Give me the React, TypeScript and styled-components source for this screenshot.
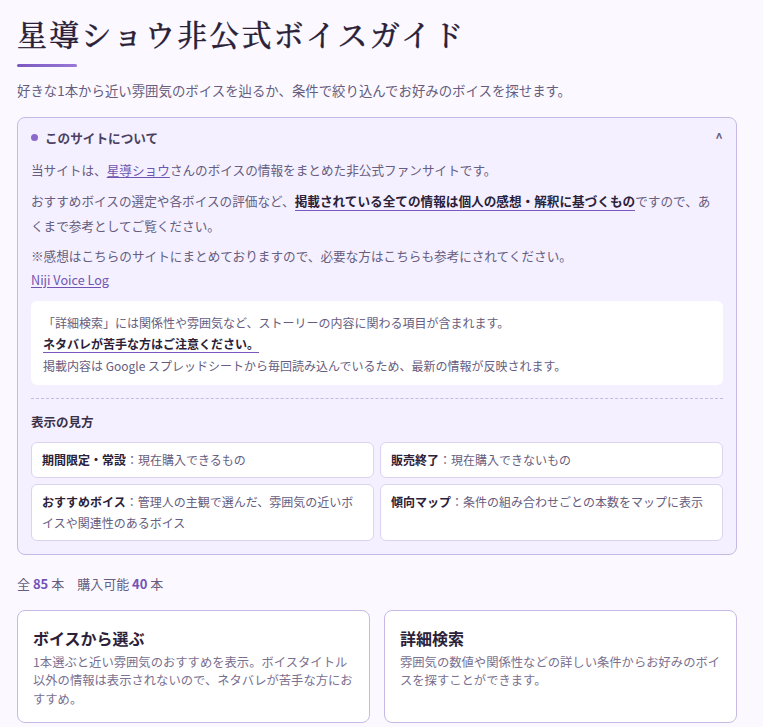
import * as React from "react";
import styled, { createGlobalStyle } from "styled-components";

const GlobalStyle = createGlobalStyle`
  html, body {
    margin: 0;
    padding: 0;
    height: 727px;
    overflow: hidden;
    background: #fbf9ff;
  }
  body {
    font-family: "Noto Sans CJK JP", "Noto Sans", sans-serif;
    color: #665d80;
  }
`;

const Page = styled.div`
  width: 720px;
  margin-left: 17px;
  padding-top: 13px;
`;

const Title = styled.h1`
  margin: 0;
  font-family: "Noto Serif CJK JP", "Liberation Serif", "Noto Sans CJK JP", serif;
  font-weight: 500;
  font-size: 30px;
  line-height: 40px;
  letter-spacing: 2.15px;
  color: #2b2138;
  -webkit-text-stroke: 0.3px #2b2138;
`;

const TitleRule = styled.div`
  width: 60px;
  height: 3px;
  margin-top: 11px;
  border-radius: 2px;
  background: linear-gradient(90deg, #7a58c0, #9a78d8);
`;

const Lead = styled.p`
  margin: 11px 0 0;
  font-size: 13.42px;
  line-height: 24px;
`;

const Panel = styled.section`
  margin-top: 15px;
  padding: 8px 13px 13px;
  background: #f4f0ff;
  border: 1px solid #c6b9e6;
  border-radius: 8px;
`;

const PanelHead = styled.div`
  display: flex;
  align-items: center;
  height: 22px;
  font-size: 12.64px;
  font-weight: 700;
  color: #4b4160;
`;

const Dot = styled.span`
  width: 7px;
  height: 7px;
  margin-right: 7px;
  border-radius: 50%;
  background: #8a68cc;
`;

const Caret = styled.span`
  margin-left: auto;
  font-size: 13px;
  color: #6c6280;
`;

const Para = styled.p<{ $gap?: number }>`
  margin: ${({ $gap }) => $gap ?? 5.5}px 0 0;
  font-size: 12.64px;
  line-height: 25px;
`;

const LinkLine = styled.p`
  margin: 0;
  font-size: 12.64px;
  line-height: 24px;
`;

const Link = styled.a`
  color: #6f55b0;
  text-decoration: underline;
  text-underline-offset: 2px;
`;

const Strong = styled.strong`
  font-weight: 700;
  color: #2b2138;
  border-bottom: 1px solid #7a58c0;
`;

const Notice = styled.div`
  margin-top: 8.5px;
  padding: 11px 12px 9px;
  background: #fff;
  border-radius: 6px;
  font-size: 12px;
  line-height: 21.5px;
`;

const Divider = styled.hr`
  margin: 13px 0 0;
  border: 0;
  border-top: 1px dashed #c6b9e6;
`;

const SubHead = styled.h3`
  margin: 13px 0 0;
  font-size: 12.5px;
  line-height: 20px;
  font-weight: 700;
  color: #3a3048;
`;

const LegendGrid = styled.div`
  display: grid;
  grid-template-columns: 1fr 1fr;
  gap: 6px;
  margin-top: 10px;
`;

const LegendCard = styled.div`
  padding: 6px 10px;
  background: #fff;
  border: 1px solid #dcd3f0;
  border-radius: 6px;
  font-size: 12px;
  line-height: 21.5px;
`;

const LegendKey = styled.b`
  font-weight: 700;
  color: #2b2138;
`;

const Counts = styled.p`
  margin: 17px 0 0;
  font-size: 13px;
  line-height: 24px;
`;

const Num = styled.b`
  font-weight: 700;
  color: #7352b8;
`;

const Choices = styled.div`
  display: grid;
  grid-template-columns: 1fr 1fr;
  gap: 14px;
  margin-top: 14px;
`;

const Choice = styled.div`
  padding: 15px 15px 12px;
  background: #fff;
  border: 1px solid #c6b9e6;
  border-radius: 8px;
  height: 113px;
  box-sizing: border-box;
`;

const ChoiceTitle = styled.div`
  font-size: 16px;
  line-height: 24px;
  font-weight: 700;
  color: #2b2138;
`;

const ChoiceText = styled.div`
  margin-top: 3px;
  font-size: 12.32px;
  line-height: 18.67px;
  color: #7a7090;
`;

export default function App() {
  return (
    <Page>
      <GlobalStyle />
      <Title>星導ショウ非公式ボイスガイド</Title>
      <TitleRule />
      <Lead>好きな1本から近い雰囲気のボイスを辿るか、条件で絞り込んでお好みのボイスを探せます。</Lead>
      <Panel>
        <PanelHead>
          <Dot />
          このサイトについて
          <Caret>^</Caret>
        </PanelHead>
        <Para $gap={9}>
          当サイトは、<Link>星導ショウ</Link>さんのボイスの情報をまとめた非公式ファンサイトです。
        </Para>
        <Para>
          おすすめボイスの選定や各ボイスの評価など、<Strong>掲載されている全ての情報は個人の感想・解釈に基づくもの</Strong>ですので、あくまで参考としてご覧ください。
        </Para>
        <Para>※感想はこちらのサイトにまとめておりますので、必要な方はこちらも参考にされてください。</Para>
        <LinkLine>
          <Link>Niji Voice Log</Link>
        </LinkLine>
        <Notice>
          「詳細検索」には関係性や雰囲気など、ストーリーの内容に関わる項目が含まれます。
          <br />
          <Strong>ネタバレが苦手な方はご注意ください。</Strong>
          <br />
          掲載内容は Google スプレッドシートから毎回読み込んでいるため、最新の情報が反映されます。
        </Notice>
        <Divider />
        <SubHead>表示の見方</SubHead>
        <LegendGrid>
          <LegendCard>
            <LegendKey>期間限定・常設</LegendKey>：現在購入できるもの
          </LegendCard>
          <LegendCard>
            <LegendKey>販売終了</LegendKey>：現在購入できないもの
          </LegendCard>
          <LegendCard>
            <LegendKey>おすすめボイス</LegendKey>：管理人の主観で選んだ、雰囲気の近いボイスや関連性のあるボイス
          </LegendCard>
          <LegendCard>
            <LegendKey>傾向マップ</LegendKey>：条件の組み合わせごとの本数をマップに表示
          </LegendCard>
        </LegendGrid>
      </Panel>
      <Counts>
        全 <Num>85</Num> 本　購入可能 <Num>40</Num> 本
      </Counts>
      <Choices>
        <Choice>
          <ChoiceTitle>ボイスから選ぶ</ChoiceTitle>
          <ChoiceText>1本選ぶと近い雰囲気のおすすめを表示。ボイスタイトル以外の情報は表示されないので、ネタバレが苦手な方におすすめ。</ChoiceText>
        </Choice>
        <Choice>
          <ChoiceTitle>詳細検索</ChoiceTitle>
          <ChoiceText>雰囲気の数値や関係性などの詳しい条件からお好みのボイスを探すことができます。</ChoiceText>
        </Choice>
      </Choices>
    </Page>
  );
}
